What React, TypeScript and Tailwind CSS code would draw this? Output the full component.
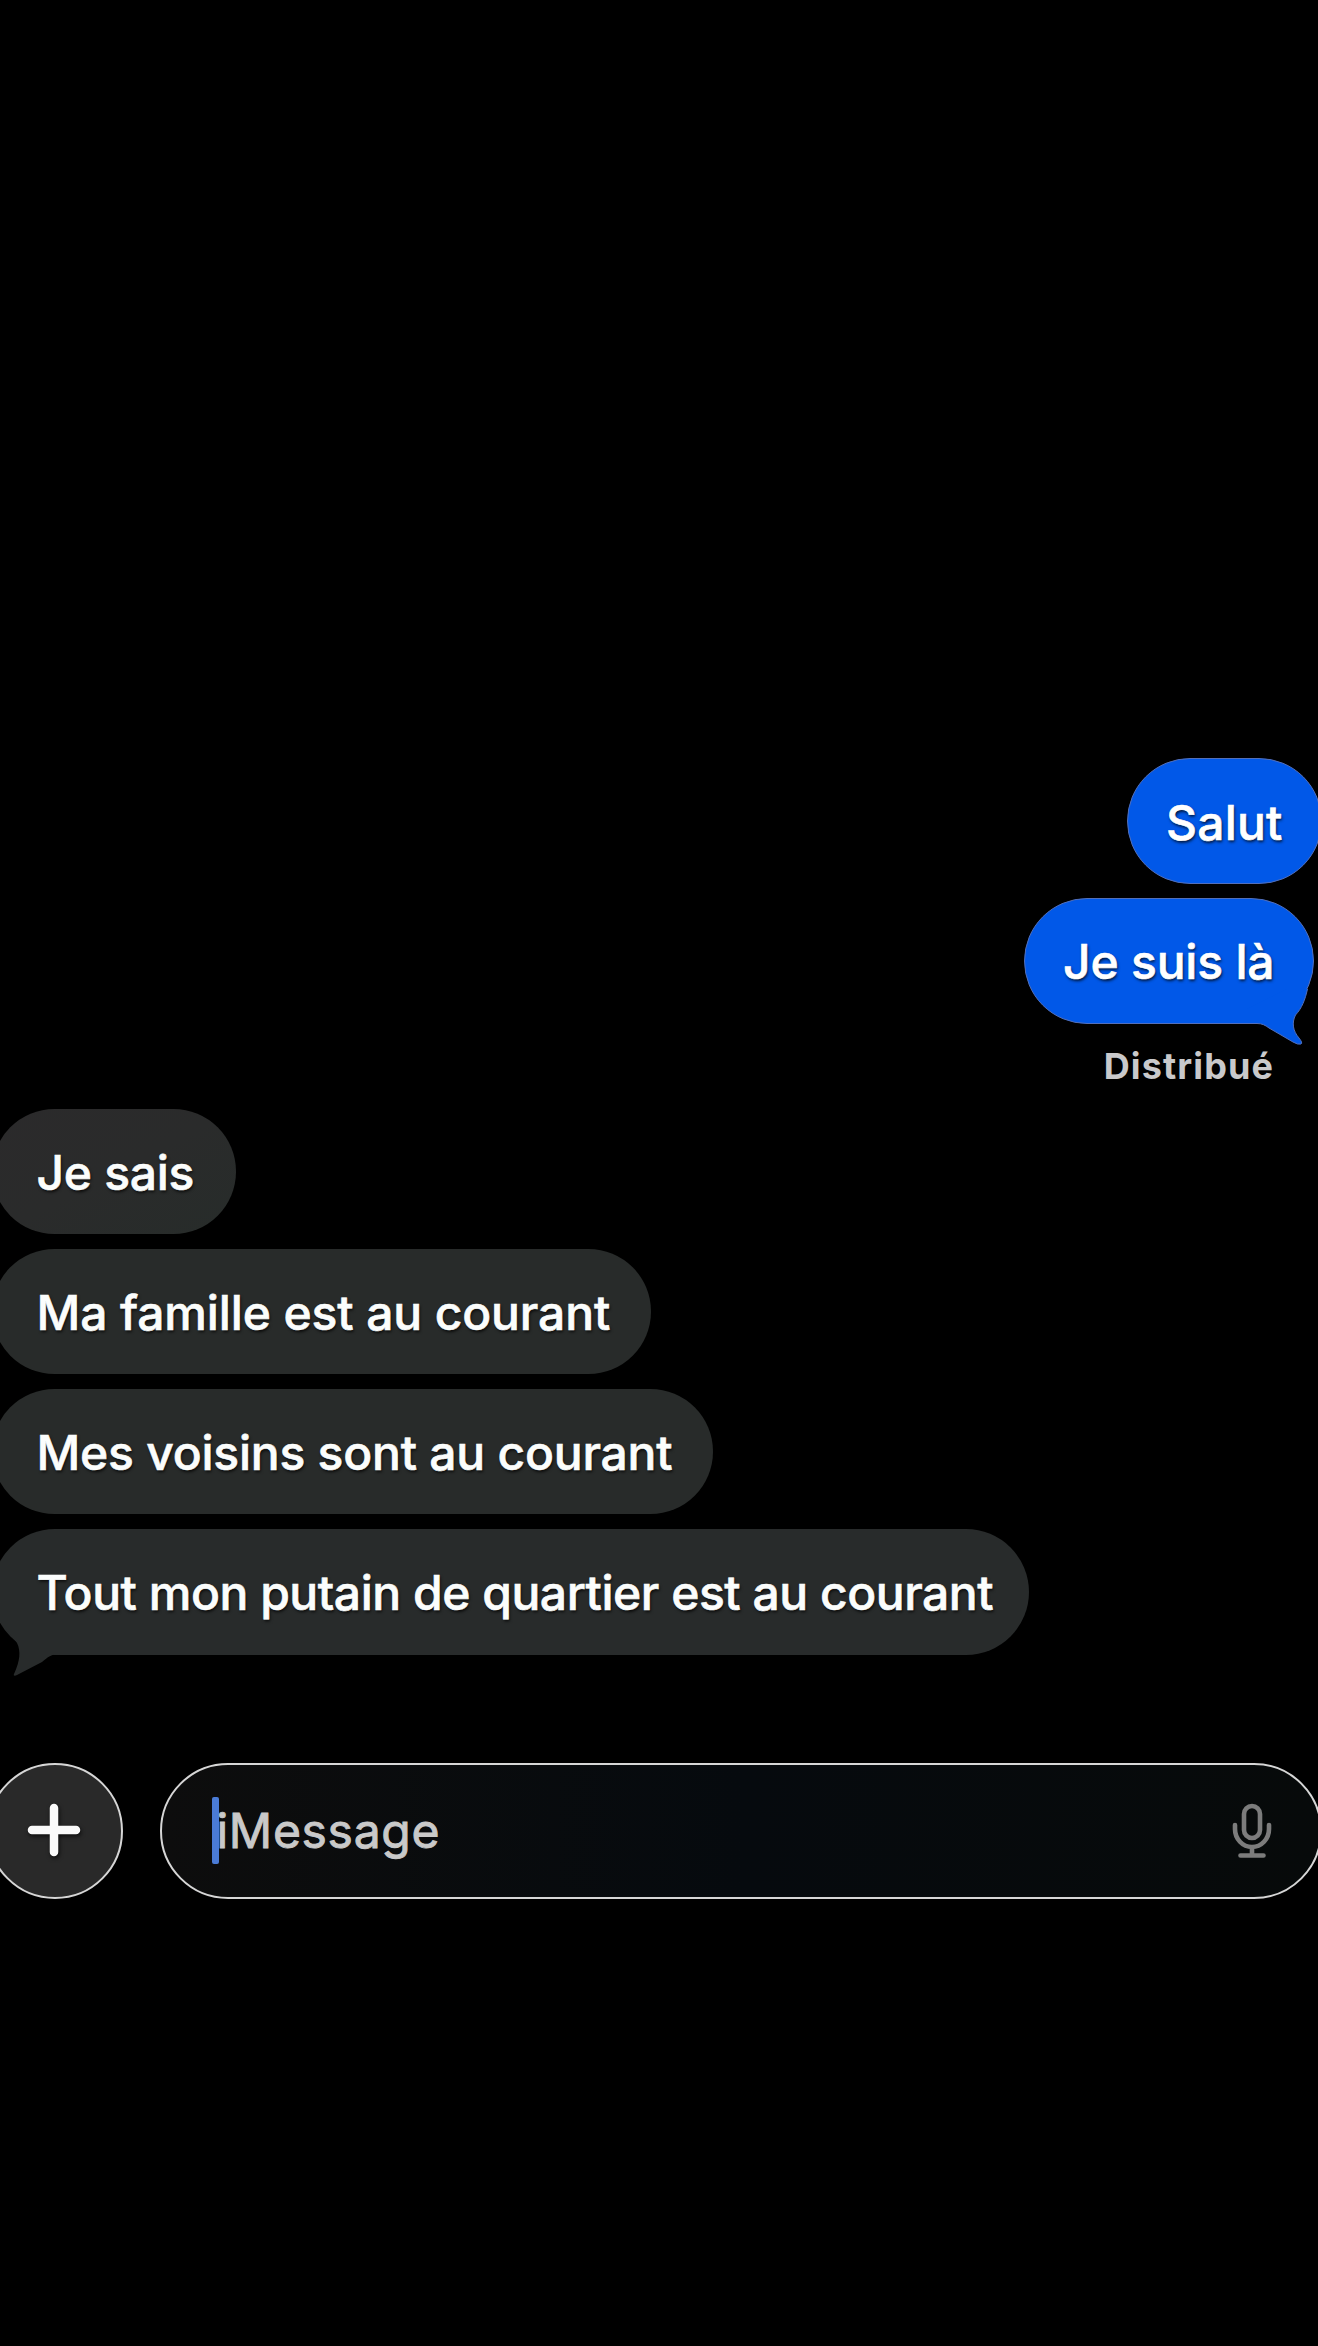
import React from "react";

const textStyle =
  "[text-shadow:1px_2px_3px_rgba(0,0,0,0.75)] [-webkit-text-stroke:0.6px_currentColor]";

function ReceivedBubble({
  text,
  size,
  tone,
  tail = false,
}: {
  text: string;
  size: string;
  tone: string;
  tail?: boolean;
}) {
  return (
    <div
      className={`relative flex h-[125.5px] shrink-0 items-center rounded-full pl-[44.5px] text-[#fbfdfc] ${size} ${tone} ${textStyle}`}
    >
      <span className="mt-[3px] whitespace-nowrap">{text}</span>
      {tail && (
        <svg
          className="absolute left-[8px] top-[91px]"
          width="80"
          height="57"
          viewBox="0 0 80 57"
          fill="#282b2b"
        >
          <path d="M0 0 C4 8 12 15 17 23 C21 31 20 41 14 54 C13 56 15 56 17 55 L42 42 C48 37 51 34 60 34 L75 34 L75 0 Z" />
        </svg>
      )}
    </div>
  );
}

export default function App() {
  return (
    <main className="flex h-[2346px] w-[1318px] flex-col overflow-hidden bg-black pt-[758px] font-['Inter','Liberation_Sans',sans-serif] text-[48px] font-medium leading-none">
      <section className="flex flex-col items-end gap-[14px]">
        <div
          className={`-mr-[4px] flex h-[126px] w-[195px] items-center rounded-full border border-[#526fba] bg-[#0158e8] pl-[38px] text-white ${textStyle}`}
        >
          <span className="mt-[3px] whitespace-nowrap tracking-[0.2px]">Salut</span>
        </div>
        <div
          className={`relative mr-[4px] flex h-[126px] w-[290px] items-center rounded-full border border-[#526fba] bg-[#0158e8] pl-[38px] text-white ${textStyle}`}
        >
          <svg
            className="absolute left-[220px] top-[90px]"
            width="68"
            height="60"
            viewBox="0 0 68 60"
          >
            <path
              d="M2 20 L2 34.5 L12 34.5 C17 34.5 20 36 24 39 L48 53 Q53 56 56 55 Q58 54 54 49 C48 42 46.5 34 50.5 26 C57 19 60 11 62.5 0 L50 -4 Z"
              fill="#0158e8"
            />
            <path
              d="M2 34.5 L12 34.5 C17 34.5 20 36 24 39 L48 53 Q53 56 56 55 Q58 54 54 49 C48 42 46.5 34 50.5 26 C57 19 60 11 62.5 0"
              fill="none"
              stroke="#526fba"
            />
          </svg>
          <span className="relative mt-px whitespace-nowrap tracking-[-0.2px]">Je suis là</span>
        </div>
      </section>

      <div className="mr-[44px] mt-[24px] flex h-[36px] items-center justify-end text-[36px] font-bold text-[#c9c9cb]">
        <span className="whitespace-nowrap tracking-[1.1px]">Distribué</span>
      </div>

      <section className="-ml-[8px] mt-[24.5px] flex flex-col items-start gap-[14.7px]">
        <ReceivedBubble
          text="Je sais"
          size="w-[244px] tracking-[-0.3px]"
          tone="bg-linear-to-br from-[#2b2a2b] via-[#2a2b2b] to-[#272c2a]"
        />
        <ReceivedBubble
          text="Ma famille est au courant"
          size="w-[659px] tracking-[-0.13px]"
          tone="bg-[#282b2a]"
        />
        <ReceivedBubble
          text="Mes voisins sont au courant"
          size="w-[721px] tracking-[-0.23px]"
          tone="bg-[#282b2a]"
        />
        <ReceivedBubble
          text="Tout mon putain de quartier est au courant"
          size="w-[1037px] tracking-[-0.47px]"
          tone="bg-[#282b2b]"
          tail
        />
      </section>

      <form
        className="-ml-[13px] mt-[108.4px] flex w-[1335px] gap-[37px]"
        onSubmit={(e) => e.preventDefault()}
      >
        <button
          type="button"
          aria-label="Ajouter"
          className="flex size-[136px] shrink-0 items-center justify-center rounded-full border-2 border-[#d6d6d6] bg-[#292929]"
        >
          <svg
            className="-ml-[3px] -mt-px drop-shadow-[1px_2px_2px_rgba(0,0,0,0.7)]"
            width="54"
            height="54"
            viewBox="0 0 54 54"
            stroke="#fafafa"
            strokeWidth="8.5"
            strokeLinecap="round"
          >
            <path d="M27 5V49M5 27H49" />
          </svg>
        </button>
        <div className="flex h-[136px] flex-1 items-center rounded-full border-2 border-[#d6d6d6] bg-linear-to-r from-[#0d0d0d] via-[#060a0e] to-[#070a0a] pl-[50px] pr-[48px]">
          <span className="h-[67px] w-[7px] shrink-0 rounded-[2px] bg-[#4a7bd6]" />
          <span className="-ml-[2.5px] whitespace-nowrap font-normal tracking-[0.7px] text-[#c9c9c9] [-webkit-text-stroke:0.9px_currentColor]">
            iMessage
          </span>
          <svg
            className="ml-auto"
            width="40"
            height="56"
            viewBox="0 0 40 56"
            fill="none"
            stroke="#7c7c7c"
            strokeWidth="4.6"
            strokeLinecap="round"
          >
            <rect x="12" y="3" width="16" height="32" rx="8" />
            <path d="M3 22V26A17 18 0 0 0 37 26V22M20 44V52M8.5 52.5H31.5" />
          </svg>
        </div>
      </form>
    </main>
  );
}
